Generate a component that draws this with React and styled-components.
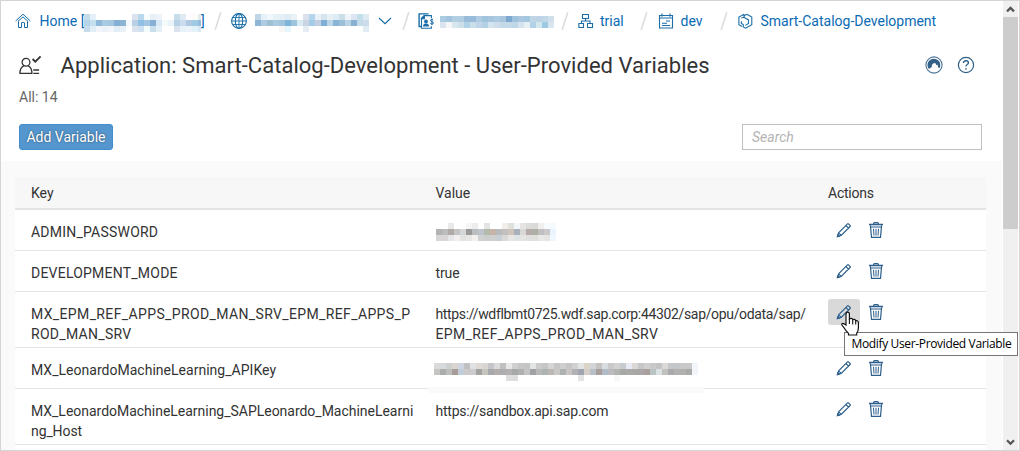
import React from "react";
import styled, { createGlobalStyle, css } from "styled-components";

const GlobalStyle = createGlobalStyle`
  * { box-sizing: border-box; }
  html, body { margin: 0; padding: 0; overflow: hidden; }
  body { font-family: Roboto, "Liberation Sans", sans-serif; font-size: 14px; color: #333; background: #fff; }
`;

const Frame = styled.div`
  position: relative;
  display: flex;
  width: 1020px;
  height: 451px;
  border: 1px solid #d5d5d5;
  background: #fff;
  overflow: hidden;
`;
const Page = styled.main`
  display: flex;
  flex-direction: column;
  width: 1001px;
  height: 449px;
  overflow: hidden;
  > * { flex: none; }
`;

/* breadcrumbs */
const Breadcrumbs = styled.nav`
  display: flex;
  align-items: center;
  height: 39px;
  padding-left: 14px;
  color: #0a6ab4;
`;
const Crumb = styled.div`
  display: flex;
  align-items: center;
  flex: none;
  width: ${(p) => p.$width}px;
  height: 39px;
  svg { flex: none; display: block; }
`;
const Label = styled.span`
  flex: none;
  white-space: pre;
  line-height: 20px;
  margin-left: ${(p) => p.$gap ?? 0}px;
  width: ${(p) => (p.$width ? `${p.$width}px` : "auto")};
`;
const Redacted = styled.svg`
  margin-left: ${(p) => p.$gap ?? 0}px;
  margin-top: ${(p) => p.$drop ?? 0}px;
`;
const SlashMark = styled.svg`
  flex: none;
  display: block;
  margin-right: ${(p) => p.$gap}px;
`;

/* header */
const Header = styled.header`
  display: flex;
  align-items: center;
  height: 50px;
  padding: 0 27px 0 18px;
  svg { flex: none; }
`;
const Title = styled.h1`
  flex: 1;
  margin: 2px 0 0 18.5px;
  font-size: 22px;
  font-weight: 400;
  line-height: 30px;
  white-space: nowrap;
  letter-spacing: 0.025px;
`;
const HeaderIcons = styled.div`
  display: flex;
  gap: 14px;
`;
const Count = styled.div`
  height: 20px;
  margin-top: -3px;
  margin-bottom: 1px;
  padding-left: 18px;
  line-height: 20px;
  color: #666;
`;
const Toolbar = styled.div`
  display: flex;
  justify-content: space-between;
  padding: 16px 20px 0 18px;
  height: 53px;
`;
const AddButton = styled.button`
  width: 94px;
  height: 26px;
  padding: 0;
  border: 1px solid #428dcb;
  border-radius: 3px;
  background: #5496cd;
  color: #fff;
  font: inherit;
  text-shadow: 0 0 2px rgba(0, 0, 0, 0.55);
  white-space: nowrap;
`;
const Search = styled.input`
  width: 240px;
  height: 26px;
  padding: 0 9px;
  border: 1px solid #bfbfbf;
  border-radius: 0;
  background: #fff;
  font: inherit;
  outline: none;
  &::placeholder { color: #b3b3b3; font-style: italic; opacity: 1; }
`;

/* table */
const Content = styled.section`
  padding: 16px 16px 0 14px;
  background: #fafafa;
`;
const Table = styled.div`
  width: 971px;
  background: #fff;
`;
const columns = css`
  display: grid;
  grid-template-columns: 404.5px 392.5px 1fr;
  padding-left: 16px;
`;
const HeadRow = styled.div`
  ${columns}
  height: 33px;
  border-bottom: 2px solid #e4e4e4;
  background: #f7f7f7;
  line-height: 32px;
`;
const Row = styled.div`
  ${columns}
  height: ${(p) => (p.$tall ? 56 : 41)}px;
  border-bottom: 1px solid #e4e4e4;
`;
const Cell = styled.div`
  padding-top: 13px;
  line-height: 19.6px;
  white-space: nowrap;
`;
const Line = styled.div`
  letter-spacing: ${(p) => p.$spacing ?? 0}px;
`;
const Actions = styled.div`
  display: flex;
  align-items: flex-start;
  padding-top: 7px;
`;
const IconButton = styled.button`
  display: flex;
  align-items: center;
  justify-content: center;
  width: 32px;
  height: 26px;
  padding: 0;
  border: 0;
  border-radius: 3px;
  background: ${(p) => (p.$hover ? "#d9d9d9" : "transparent")};
`;
const ActionsTitle = styled.span`
  letter-spacing: -0.25px;
`;

/* the redaction over the API key also hides a stretch of the divider below it */
const DividerPatch = styled.div`
  position: absolute;
  left: 427px;
  top: 386px;
  width: 276px;
  height: 6px;
  background: #fafafa;
`;

/* scrollbar */
const Scrollbar = styled.div`
  display: flex;
  flex-direction: column;
  width: 15px;
  height: 449px;
  margin-left: 1px;
  background: #f0f0f0;
`;
const ScrollArrow = styled.div`
  display: flex;
  align-items: center;
  justify-content: center;
  height: 16px;
`;
const ScrollThumb = styled.div`
  height: 212px;
  margin-bottom: auto;
  background: #cdcdcd;
`;

/* overlays */
const Tooltip = styled.div`
  position: absolute;
  left: 843px;
  top: 331px;
  width: 174px;
  height: 24px;
  padding-left: 6.5px;
  border: 1px solid #767676;
  background: #fff;
  color: #000;
  font: 12px/22px "Open Sans", "Noto Sans", sans-serif;
  letter-spacing: -0.35px;
  white-space: nowrap;
`;
const Pointer = styled.svg`
  position: absolute;
  left: 839px;
  top: 310px;
`;

const hidden = {
  home: [
    "c5dceb e5f1f8 - - - - - - dbe3ee b9d8ee f8fbfd e8f0f6 edf3f8 - - c5dceb dfeaf3 fffdff fdfbf8 e2ecec",
    "b8d5e8 c3dff0 8fb8d8 a9cbe2 a5c6df 85b0d5 8bb4d3 f3f9fc b9cfe4 90c0e3 a3c6e2 86b1d5 d9e8f5 f4faf8 e9f3f8 b8d0e4 cbdcef b0c9e2 a0c9e4 94bcdc",
    "c4dcec e2eef6 f2f6fa ecf3f8 f2f6fa e2edf5 eaf2f8 - dbe3ee d0e2f0 f2fafa c9dfee e5eff6 - - dbe3ee e7f1f8 edf3fa e2f2f8 d8e8f2",
  ],
  region: [
    "c0d6e7 e5f1f9 f2f7fb e5f1f5 e5eff6 deecf5 e9f2f7 - dbe1ed b4d5ed e9f1f8 d5e5ef e6f0f5 dcebf5 cbdfea eff4f8 dbe6f2 c4dfec dfebf2",
    "8fb5d5 b0cbdf 9fbfd2 a8c9e0 a0c5dc 7cb4da 9ec4dc d8ebf5 cbd4e4 a5cce7 c3cfe0 80afd6 bcd6e8 88b5d6 9abfd6 b9d3e5 88b0d3 c6dbea cbdcea",
    "- - - - faf5f7 e6f6fd - - e4edf4 - - - - - - - - - e2ecf5",
  ],
  account: [
    "aacbe0 a3c4dd b4cee2 b0cde1 9bbcd9 98bbd9 afcce3 9fc4dc a8c5de adcce3 aac4dc 7da9d0 9fc3dc abc7df a3c7df c0d5e6 bdd3e5 c0d8e8 cfdfeb",
    "dce4ef f6f6f6 d8e6ef cce0ec b1d2e6 cbdfeb c0d6e8 b2d1e4 d5e5ef cfddea c4d9e8 c3d9e8 bfd7e7 d4e3ed e5eff4 b3d1e6 d3e7ef 9dc9e2 dae6ef",
  ],
  password: [
    "- - e9e9e9 - - f5f5f5 ececec - e2e5e4 - - f3eeea e0e1dc f4f7fa e5e4e3 dcdcda dbd9d7 f1efee f6fbff f5faff",
    "b2b2b4 bdbcbc afa9a8 c4c4c4 d5d6d7 9b9a9b bcbdbf bdc4cc b4b9ae c6b4a8 b9babc c2c0bf cdc5bc a9b0bd d8d8d8 b6a9aa adb0a4 c0bfc1 c9c9ca e9f3fe",
    "d8d7d8 dad6d8 e6e6e8 f3efef e2e2e1 e8e8e7 f2f1ef d0d2d1 cbcecd ced0cf c9d0d5 dad9d7 e9e7e6 e0e3e3 e4e4e3 e0e0df e0dfdc e9e9e8 e7e5e4 f0f7ff",
  ],
  apiKey: [
    "dadadb d6dadc cdd0cf d9d4cf cdd4df c0c0c2 e0e1e3 e0dad7 d9d5d3 c3c5c8 dadada c0c0c1 e8e8e9 d0d0cf c6c6c6 c3c4c4 e3e4e5 cbcbca c4c5c5 d5d5d4 c6c6c6 cfcfcd c6c5c5 d0d2d2 e1e3e4 dad4c9 d2d4d7 c5c2c2 d7dce0 c7c9cb d2d2d3 c8cbce e7eaf2 dbd8d6 c5c7c8 d0d0d0 cac9c7 c4c4c4 dad9d8 c5c7c9 c4c7ca cbc9c8 c9c8c8 f2f5fa",
    "c5c6c4 aaaead bcbdbc a79c97 c3ccd9 cdcacb cccccf a4a3a3 c7c3bd a9a8aa b3adae aeadb0 b3b1b2 a6a9a7 b0b0af c3c5c4 a1a2a5 b9b9b9 adb3b1 bbb7b5 c9c8c7 adb1b0 c9c5c3 b1b1b3 9ea5ae d6cfc7 b9bfc6 a89e9b b1bbc5 bababf b1b3b0 a7a7a6 aaa9a8 aaa8a6 aba5a7 a9a09e b9c3c3 dbe1e5 c0c1bf aaaaac b3b0b0 b1b1ad a8aaa9 f1f5fa",
    "- - - - - - - - - - - - dedfdd dddddf - - - - - - - - - - e2e4e4 - - - - - f7f7f7 - - - - - - - - - - - - -",
  ],
};

function Mosaic({ rows, width, gap, drop }) {
  return (
    <Redacted width={width} height={rows.length * 6} $gap={gap} $drop={drop} shapeRendering="crispEdges" display="block">
      {rows.flatMap((row, y) =>
        row.split(" ").map((c, x) =>
          c === "-" ? null : <rect key={`${x}-${y}`} x={x * 6} y={y * 6} width="6" height="6" fill={`#${c}`} />
        )
      )}
    </Redacted>
  );
}

const Slash = ({ gap }) => (
  <SlashMark width="8" height="18" $gap={gap}>
    <path d="M6.8.3 1.2 17.7" stroke="#dcdcdc" strokeWidth="1.6" fill="none" />
  </SlashMark>
);

const Icon = ({ size = 16, color = "#1b6ea8", width = 1.1, children }) => (
  <svg width={size} height={size} viewBox="0 0 16 16" fill="none" stroke={color} strokeWidth={width}>
    {children}
  </svg>
);

const HomeIcon = () => (
  <Icon width={1}>
    <path d="M.6 8 8 1.2 15.4 8M2.7 8.7 8 3.9l5.3 4.8M3.5 8.4v6.1h3V10q0-.5.5-.5h2q.5 0 .5.5v4.500h3V8.400" />
  </Icon>
);
const GlobeIcon = () => (
  <Icon>
    <circle cx="8" cy="8" r="7.4" />
    <ellipse cx="8" cy="8" rx="3.7" ry="7.4" />
    <path d="M8 .6v14.8M1.5 4.5h13M.6 8h14.8M1.5 11.5h13" strokeWidth=".9" />
  </Icon>
);
const AccountIcon = () => (
  <Icon>
    <path d="M3 13.5H1.1V.9h9.5" strokeWidth="1.4" />
    <path d="M13.4 5V2.6H6.2L3.5 5.3v9.9h9.9v-2" />
    <path d="M3.5 5.6h2.9V2.6z" fill="#1b6ea8" />
    <circle cx="8" cy="8.5" r="1.9" fill="#1b6ea8" stroke="none" />
    <path d="M5 13.6q0-3 3-3t3 3z" fill="#1b6ea8" stroke="none" />
    <path d="M15.2 7.2q-.4-.8-1.4-.8-1.3 0-1.3 1.1 0 .9 1.4 1.2 1.5.3 1.5 1.3 0 1.1-1.5 1.1-1.2 0-1.6-.9M13.9 5.4v6.6" strokeWidth="1" />
  </Icon>
);
const OrgIcon = () => (
  <Icon width={1.1}>
    <path d="M4.500 1.500h6v4h-6zM.9 10.500h4.600v4H.9zM9.500 10.500h5v4h-5zM7.500 5.500v2.500M3.500 10.500V8h8.500v2.500" />
  </Icon>
);
const SpaceIcon = () => (
  <Icon width={1.1}>
    <path d="M1.500 2.500h13v12.500h-13zM1.500 5h13M4 .6v3.200M12 .6v3.200M8 8h4M4 10.200h5M4 12.500h8" />
  </Icon>
);
const AppIcon = () => (
  <Icon width={1.1}>
    <path d="M6 1.3.9 4.1v7.600l3.200 1.800M8.800 1.300l5 2.800v7.600l-6.300 3.500-2.200-1.200v-2.400M6 1.300v2.900l-2.700.8M8.800 1.300 6.200 2.800v1.700l4.300 2.400v3.600l-3.100 1.900M3.400 8.200v2.200l2.100 1.400" />
  </Icon>
);
const ChevronIcon = () => (
  <svg width="14" height="8" fill="none" stroke="#1b6ea8" strokeWidth="1.2">
    <path d="m1 1 6 5.6L13 1" />
  </svg>
);
const UserIcon = () => (
  <svg width="23" height="21" fill="none" stroke="#333" strokeWidth="1.3">
    <circle cx="7" cy="7.3" r="3.9" />
    <path d="M4.8 10.8Q.9 12.6.9 18.3h12q0-5.7-3.7-7.5M14.3 15h5.8M14.3 18.3h5.8" />
    <path d="m13.6 4 2.7 2.7 5.3-5.3" strokeWidth="1.8" />
  </svg>
);
const ScopeIcon = () => (
  <svg width="18" height="18" fill="none" stroke="#4b7396">
    <circle cx="9" cy="9" r="8.1" strokeWidth="1.1" />
    <path
      d="M3.500 12.500A6.400 6.400 0 1 1 14.600 12L13.200 11.400 12.400 8.600 11.400 9.200 10.600 7.200 8.400 7.200 7 8.800 6.600 11.200 4.600 12.400z"
      fill="#346187" stroke="none"
    />
  </svg>
);
const HelpIcon = () => (
  <svg width="18" height="18" fill="none" stroke="#2f5f87" strokeWidth="1.2">
    <circle cx="9" cy="9" r="7.6" />
    <path d="M6.5 7V6.6Q6.7 4.7 9 4.7t2.4 2q0 1.1-1.2 1.8Q9 9.2 9 10.6" strokeWidth="1.4" />
    <path d="M8.1 12.2h1.7v1.4H8.1z" fill="#2f5f87" stroke="none" />
  </svg>
);
const PencilIcon = () => (
  <Icon color="#2c5f8c" width={1.15}>
    <path d="m1.7 14.3.9-3.5L11.5 1.9q.5-.5 1 0l1.6 1.6q.5.5 0 1L5.2 13.4zM2.6 10.8l2.6 2.6M9.9 3.5l2.6 2.6" />
    <path d="m1.3 14.7.5-1.9 1.4 1.4z" fill="#2c5f8c" />
  </Icon>
);
const TrashIcon = () => (
  <Icon color="#2c5f8c" width={1.2}>
    <path d="M1 2.5h14M5.600 2q0-1.300 1-1.300h2.800q1 0 1 1.300" strokeWidth="1.3" />
    <path d="M2.400 3.300l1.100 12h9l1.100-12M2 5h12" />
    <path d="m5.500 6.800.5 6.800M8 6.800v6.800M10.500 6.800l-.5 6.800" strokeWidth="1" />
  </Icon>
);
const Arrow = ({ down }) => (
  <svg width="9" height="7" fill="none" stroke="#555" strokeWidth="2.2">
    <path d={down ? "m1 1.2 3.5 3.5L8 1.2" : "M1 5.4l3.5-3.5L8 5.4"} />
  </svg>
);

/* each line of a cell: its text and its letter spacing */
const variables = [
  { key: [["ADMIN_PASSWORD", 0.22]], hidden: { rows: hidden.password, width: 120, gap: 0.5, drop: 0 } },
  { key: [["DEVELOPMENT_MODE", 0.22]], value: [["true", -0.1]] },
  {
    key: [["MX_EPM_REF_APPS_PROD_MAN_SRV_EPM_REF_APPS_P", 0.37], ["ROD_MAN_SRV", 0.3]],
    value: [["https://wdflbmt0725.wdf.sap.corp:44302/sap/opu/odata/sap/", -0.34], ["EPM_REF_APPS_PROD_MAN_SRV", 0.37]],
    hover: true,
  },
  { key: [["MX_LeonardoMachineLearning_APIKey", 0.02]], hidden: { rows: hidden.apiKey, width: 264, gap: -1.5, drop: 2 } },
  {
    key: [["MX_LeonardoMachineLearning_SAPLeonardo_MachineLearni", -0.02], ["ng_Host", -0.1]],
    value: [["https://sandbox.api.sap.com", -0.22]],
  },
];

const Lines = ({ items }) => items.map(([text, spacing]) => <Line key={text} $spacing={spacing}>{text}</Line>);

const VariableRow = ({ item }) => (
  <Row $tall={item.key.length > 1}>
    <Cell><Lines items={item.key} /></Cell>
    <Cell>{item.hidden ? <Mosaic {...item.hidden} /> : <Lines items={item.value} />}</Cell>
    <Actions>
      <IconButton $hover={item.hover} aria-label="Modify"><PencilIcon /></IconButton>
      <IconButton aria-label="Delete"><TrashIcon /></IconButton>
    </Actions>
  </Row>
);

export default function App() {
  return (
    <Frame>
      <GlobalStyle />
      <Page>
        <Breadcrumbs>
          <Crumb $width={199}>
            <HomeIcon />
            <Label $gap={8.5} $width={44.5}>Home [</Label>
            <Mosaic rows={hidden.home} width={117} drop={4} />
            <Label>]</Label>
          </Crumb>
          <Slash gap={9} />
          <Crumb $width={171}>
            <GlobeIcon />
            <Mosaic rows={hidden.region} width={114} gap={8} drop={5} />
            <Label $width={9} />
            <ChevronIcon />
          </Crumb>
          <Slash gap={8} />
          <Crumb $width={143}>
            <AccountIcon />
            <Mosaic rows={hidden.account} width={114} gap={6} drop={3} />
          </Crumb>
          <Slash gap={9} />
          <Crumb $width={62}>
            <OrgIcon />
            <Label $gap={6}>trial</Label>
          </Crumb>
          <Slash gap={10} />
          <Crumb $width={62}>
            <SpaceIcon />
            <Label $gap={6.5}>dev</Label>
          </Crumb>
          <Slash gap={10} />
          <Crumb $width={210}>
            <AppIcon />
            <Label $gap={6.5}>Smart-Catalog-Development</Label>
          </Crumb>
        </Breadcrumbs>
        <Header>
          <UserIcon />
          <Title>Application: Smart-Catalog-Development - User-Provided Variables</Title>
          <HeaderIcons>
            <ScopeIcon />
            <HelpIcon />
          </HeaderIcons>
        </Header>
        <Count>All: 14</Count>
        <Toolbar>
          <AddButton>Add Variable</AddButton>
          <Search placeholder="Search" />
        </Toolbar>
        <Content>
          <Table>
            <HeadRow>
              <span>Key</span>
              <span>Value</span>
              <ActionsTitle>Actions</ActionsTitle>
            </HeadRow>
            {variables.map((v) => <VariableRow key={v.key[0][0]} item={v} />)}
            <Row />
          </Table>
        </Content>
      </Page>
      <Scrollbar>
        <ScrollArrow><Arrow /></ScrollArrow>
        <ScrollThumb />
        <ScrollArrow><Arrow down /></ScrollArrow>
      </Scrollbar>
      <DividerPatch />
      <Tooltip>Modify User-Provided Variable</Tooltip>
      <Pointer width="20" height="26">
        <path
          d="M6 14V3.2Q6 1.2 7.7 1.2T9.4 3.2V8Q11.8 6.6 12.7 8.6 15 7.6 15.7 9.8 18.4 9.3 18.4 12v5q0 3-1.7 5.2v1.8H8.500v-1.600Q5.500 19.500 3.700 16.300 1 13.700 2 12.700T6 14z"
          fill="#fff" stroke="#111" strokeWidth="1.2"
        />
        <path d="M9.4 8v5M12.7 9v4.500M15.700 10v3.500" stroke="#111" strokeWidth="1.1" />
      </Pointer>
    </Frame>
  );
}
